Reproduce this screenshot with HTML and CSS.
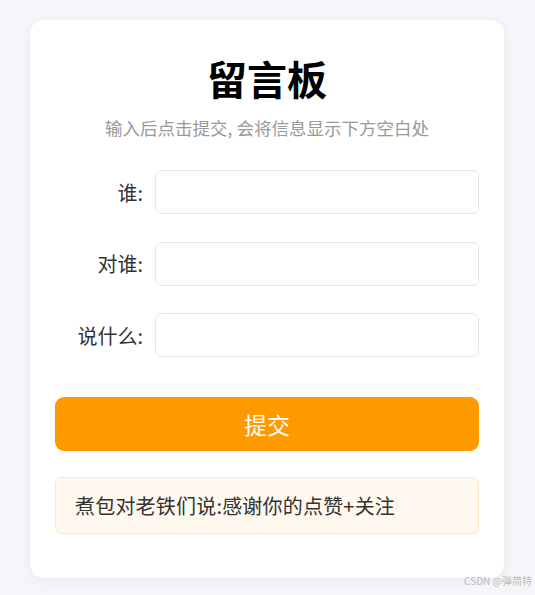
FILE: index.html
```html
<!DOCTYPE html>
<html lang="zh-CN">
<head>
<meta charset="utf-8">
<title>留言板</title>
<link rel="stylesheet" href="styles.css">
</head>
<body>
<div class="card">
  <h1 class="title">留言板</h1>
  <p class="subtitle">输入后点击提交, 会将信息显示下方空白处</p>
  <form class="form">
    <div class="row">
      <label class="label">谁:</label>
      <input class="input" type="text">
    </div>
    <div class="row">
      <label class="label">对谁:</label>
      <input class="input" type="text">
    </div>
    <div class="row">
      <label class="label">说什么:</label>
      <input class="input" type="text">
    </div>
  </form>
  <button class="submit" type="button">提交</button>
  <div class="message">煮包对老铁们说:感谢你的点赞+关注</div>
</div>
<div class="watermark">CSDN @弹简特</div>
</body>
</html>
```
FILE: styles.css
```css
html, body {
  margin: 0;
  padding: 0;
}
body {
  background: #f5f6fa;
  font-family: "Noto Sans CJK SC", "Noto Sans", sans-serif;
  padding: 20px 0 0;
  height: 595px;
  box-sizing: border-box;
  position: relative;
}
.card {
  width: 474px;
  box-sizing: border-box;
  margin: 0 0 0 30px;
  background: #fff;
  border-radius: 14px;
  box-shadow: 0 2px 12px rgba(0, 0, 0, 0.06);
  padding: 33px 25px 44px;
  display: flex;
  flex-direction: column;
}
.title {
  margin: 0;
  text-align: center;
  font-size: 40px;
  line-height: 50px;
  font-weight: 700;
  color: #000;
}
.subtitle {
  margin: 13px 0 0;
  text-align: center;
  font-size: 17.5px;
  line-height: 24px;
  color: #999;
}
.form {
  margin: 30px 0 0;
  display: flex;
  flex-direction: column;
  gap: 27.5px;
}
.row {
  display: flex;
  align-items: center;
  gap: 12px;
}
.label {
  width: 88px;
  text-align: right;
  font-size: 20px;
  color: #333;
}
.input {
  flex: 1;
  height: 44px;
  box-sizing: border-box;
  border: 1px solid #e6e6ea;
  border-radius: 7px;
  background: #fff;
  padding: 0 12px;
  font-size: 16px;
  outline: none;
}
.submit {
  margin-top: 40px;
  height: 54px;
  border: none;
  border-radius: 9px;
  background: #ff9900;
  color: #fff;
  font-family: inherit;
  font-size: 23px;
  cursor: pointer;
}
.message {
  margin-top: 26px;
  height: 57px;
  box-sizing: border-box;
  background: #fff8ee;
  border: 1px solid #fde5c6;
  border-radius: 7px;
  padding: 0 19px;
  display: flex;
  align-items: center;
  font-size: 20px;
  letter-spacing: 0.2px;
  color: #333;
}
.watermark {
  position: absolute;
  right: 3px;
  bottom: 7px;
  font-size: 10px;
  color: #bbb;
}
```
